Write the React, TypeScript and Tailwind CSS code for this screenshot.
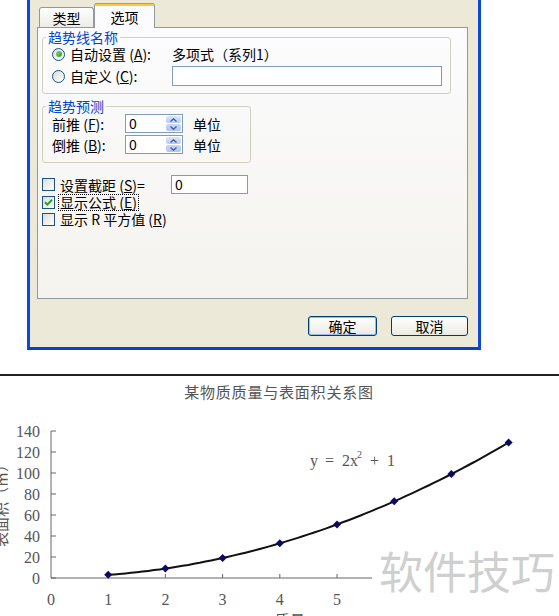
import React from "react";

function Radio({ checked }: { checked?: boolean }) {
  return (
    <span className="flex h-[13px] w-[13px] shrink-0 items-center justify-center rounded-full border border-[#1c5180] bg-gradient-to-br from-[#dcdcd7] to-white">
      {checked && (
        <span className="h-[6px] w-[6px] rounded-full bg-gradient-to-br from-[#7be07a] to-[#1f9a1f]" />
      )}
    </span>
  );
}

function Check({ checked }: { checked?: boolean }) {
  return (
    <span className="flex h-[13px] w-[13px] shrink-0 items-center justify-center border border-[#1c5180] bg-gradient-to-br from-[#dcdcd7] to-white">
      {checked && (
        <svg width="9" height="9" viewBox="0 0 9 9">
          <path d="M1 4.2 L3.4 6.6 L8 1.8" fill="none" stroke="#21a121" strokeWidth="2" />
        </svg>
      )}
    </span>
  );
}

function Spin() {
  return (
    <div className="flex h-[19px] w-[58px] border border-[#7f9db9] bg-white">
      <span className="flex-1 pl-[3px] leading-[17px]">0</span>
      <div className="flex w-[17px] flex-col gap-[1px] p-[1px]">
        <div className="flex flex-1 items-center justify-center rounded-[2px] bg-gradient-to-b from-[#dbe6fd] to-[#b7cbf6]">
          <svg width="7" height="4" viewBox="0 0 7 4">
            <path d="M0.5 3.5 L3.5 0.8 L6.5 3.5" fill="none" stroke="#4d6185" strokeWidth="1.4" />
          </svg>
        </div>
        <div className="flex flex-1 items-center justify-center rounded-[2px] bg-gradient-to-b from-[#c9d8fa] to-[#b0c5f4]">
          <svg width="7" height="4" viewBox="0 0 7 4">
            <path d="M0.5 0.5 L3.5 3.2 L6.5 0.5" fill="none" stroke="#4d6185" strokeWidth="1.4" />
          </svg>
        </div>
      </div>
    </div>
  );
}

function Chart() {
  const x0 = 51;
  const dx = 57.2;
  const yBase = 202;
  const k = 1.05;
  const px = (x: number) => x0 + dx * x;
  const py = (v: number) => yBase - v * k;
  const pts: string[] = [];
  for (let i = 0; i <= 70; i++) {
    const x = 1 + i * 0.1;
    pts.push(`${px(x).toFixed(1)},${py(2 * x * x + 1).toFixed(1)}`);
  }
  const data = [1, 2, 3, 4, 5, 6, 7, 8];
  const yTicks = [0, 20, 40, 60, 80, 100, 120, 140];
  const serif = "'Liberation Serif', serif";
  const cjk = "'Noto Sans CJK SC', sans-serif";
  return (
    <svg width="559" height="240" viewBox="0 0 559 240" className="block">
      <text x="279" y="22" textAnchor="middle" fontSize="15" letterSpacing="0.8" fill="#555" fontFamily={cjk}>
        某物质质量与表面积关系图
      </text>
      <line x1={x0} y1={py(140)} x2={x0} y2={yBase} stroke="#666" strokeWidth="1" />
      {yTicks.map((v) => (
        <g key={v}>
          <line x1={x0} y1={py(v)} x2={x0 + 5} y2={py(v)} stroke="#666" strokeWidth="1" />
          <text x="40" y={py(v) + 5.5} textAnchor="end" fontSize="16" fill="#555" fontFamily={serif}>
            {v}
          </text>
        </g>
      ))}
      <line x1={x0} y1={yBase} x2="372" y2={yBase} stroke="#666" strokeWidth="1" />
      {[1, 2, 3, 4, 5].map((i) => (
        <line key={i} x1={px(i)} y1={yBase - 4} x2={px(i)} y2={yBase} stroke="#666" strokeWidth="1" />
      ))}
      {[0, 1, 2, 3, 4, 5].map((i) => (
        <text key={i} x={px(i)} y="229" textAnchor="middle" fontSize="16" fill="#555" fontFamily={serif}>
          {i}
        </text>
      ))}
      <polyline points={pts.join(" ")} fill="none" stroke="#111" strokeWidth="2" />
      {data.map((x) => {
        const cx = px(x);
        const cy = py(2 * x * x + 1);
        return (
          <path
            key={x}
            d={`M${cx} ${cy - 4} L${cx + 4} ${cy} L${cx} ${cy + 4} L${cx - 4} ${cy} Z`}
            fill="#0a0a60"
          />
        );
      })}
      <g fontFamily={serif} fontSize="16" fill="#555">
        <text x="310" y="90">y</text>
        <text x="325" y="90">=</text>
        <text x="342" y="90">2x</text>
        <text x="357" y="82" fontSize="10">2</text>
        <text x="370" y="90">+</text>
        <text x="387" y="90">1</text>
      </g>
      <text
        x="0"
        y="0"
        transform="translate(7 126) rotate(-90)"
        textAnchor="middle"
        fontSize="15"
        fill="#555"
        fontFamily={cjk}
      >
        表面积（㎡）
      </text>
      <text x="290" y="250" textAnchor="middle" fontSize="15" fill="#555" fontFamily={cjk}>
        质量
      </text>
      <text x="379" y="213" fontSize="44" fill="#cfcfcf" fontFamily={cjk}>
        软件技巧
      </text>
    </svg>
  );
}

export default function App() {
  return (
    <div className="h-[616px] w-[559px] overflow-hidden bg-white font-['Noto_Sans_CJK_SC',sans-serif] text-[14px] leading-[16px] text-black">
      <div className="flex h-[350px]">
        <div className="ml-[27px] flex h-[350px] w-[454px] flex-col border-x-[3px] border-b-[3px] border-x-[#0b47d9] border-b-[#0a3fc8] bg-[#ece9d8]">
          <div className="ml-[7px] mr-[10px] flex flex-col pt-[3px]">
            <div className="flex h-[24px] items-end pl-[2px]">
              <div className="flex h-[20px] w-[55px] items-center justify-center rounded-t-[3px] border-x border-t border-[#919b9c] bg-gradient-to-b from-white to-[#ecebe6] pt-[1px]">
                类型
              </div>
              <div className="relative z-10 -mb-px flex h-[25px] w-[61px] flex-col rounded-t-[3px] border-x border-[#919b9c] bg-[#fcfcfe]">
                <div className="h-[1px] rounded-t-[3px] bg-[#e68b2c]" />
                <div className="h-[2px] bg-[#ffc83c]" />
                <div className="flex flex-1 items-center justify-center pb-[1px]">选项</div>
              </div>
            </div>
            <div className="h-[272px] border border-[#919b9c] bg-gradient-to-b from-[#fcfcfe] to-[#f4f3ee]">
              <div className="flex flex-col pl-[4px]">
                <fieldset className="mt-[2px] w-[409px] rounded-[3px] border border-[#d0d0bf] pb-[7px]">
                  <legend className="ml-[3px] px-[2px] leading-[14px] text-[#0046d5]">趋势线名称</legend>
                  <div className="mt-[2px] flex h-[16px] items-center pl-[9px]">
                    <div className="flex w-[120px] items-center gap-[5px]">
                      <Radio checked />
                      <span>
                        自动设置 (<u>A</u>):
                      </span>
                    </div>
                    <span>多项式（系列1）</span>
                  </div>
                  <div className="mt-[4px] flex h-[20px] items-center pl-[9px]">
                    <div className="flex w-[120px] items-center gap-[5px]">
                      <Radio />
                      <span>
                        自定义 (<u>C</u>):
                      </span>
                    </div>
                    <div className="h-[20px] w-[270px] border border-[#7f9db9] bg-white" />
                  </div>
                </fieldset>
                <fieldset className="mt-[5px] w-[209px] rounded-[3px] border border-[#d0d0bf] pb-[8px]">
                  <legend className="ml-[3px] px-[2px] leading-[14px] text-[#0046d5]">趋势预测</legend>
                  <div className="mt-[1px] flex h-[19px] items-center pl-[9px]">
                    <span className="w-[73px]">
                      前推 (<u>F</u>):
                    </span>
                    <Spin />
                    <span className="ml-[10px]">单位</span>
                  </div>
                  <div className="mt-[2px] flex h-[19px] items-center pl-[9px]">
                    <span className="w-[73px]">
                      倒推 (<u>B</u>):
                    </span>
                    <Spin />
                    <span className="ml-[10px]">单位</span>
                  </div>
                </fieldset>
                <div className="mt-[12px] flex h-[19px] items-center">
                  <div className="flex w-[129px] items-center gap-[5px]">
                    <Check />
                    <span>
                      设置截距 (<u>S</u>)=
                    </span>
                  </div>
                  <div className="h-[19px] w-[77px] border border-[#7f9db9] bg-white pl-[3px] leading-[17px]">0</div>
                </div>
                <div className="flex h-[16px] items-center">
                  <Check checked />
                  <span className="ml-[3px] border border-dotted border-black px-[1px] leading-[15px]">
                    显示公式 (<u>E</u>)
                  </span>
                </div>
                <div className="mt-[1px] flex h-[16px] items-center gap-[5px]">
                  <Check />
                  <span>
                    显示 R 平方值 (<u>R</u>)
                  </span>
                </div>
              </div>
            </div>
          </div>
          <div className="mr-[10px] mt-[17px] flex justify-end gap-[14px]">
            <button className="flex h-[20px] w-[69px] items-center justify-center rounded-[3px] border border-[#003c74] bg-gradient-to-b from-white to-[#eceae2] shadow-[inset_0_0_0_1px_#9cb9ee]">
              确定
            </button>
            <button className="flex h-[20px] w-[77px] items-center justify-center rounded-[3px] border border-[#003c74] bg-gradient-to-b from-white to-[#eceae2]">
              取消
            </button>
          </div>
        </div>
      </div>
      <div className="h-[24px]" />
      <div className="h-[2px] bg-[#222]" />
      <Chart />
    </div>
  );
}
